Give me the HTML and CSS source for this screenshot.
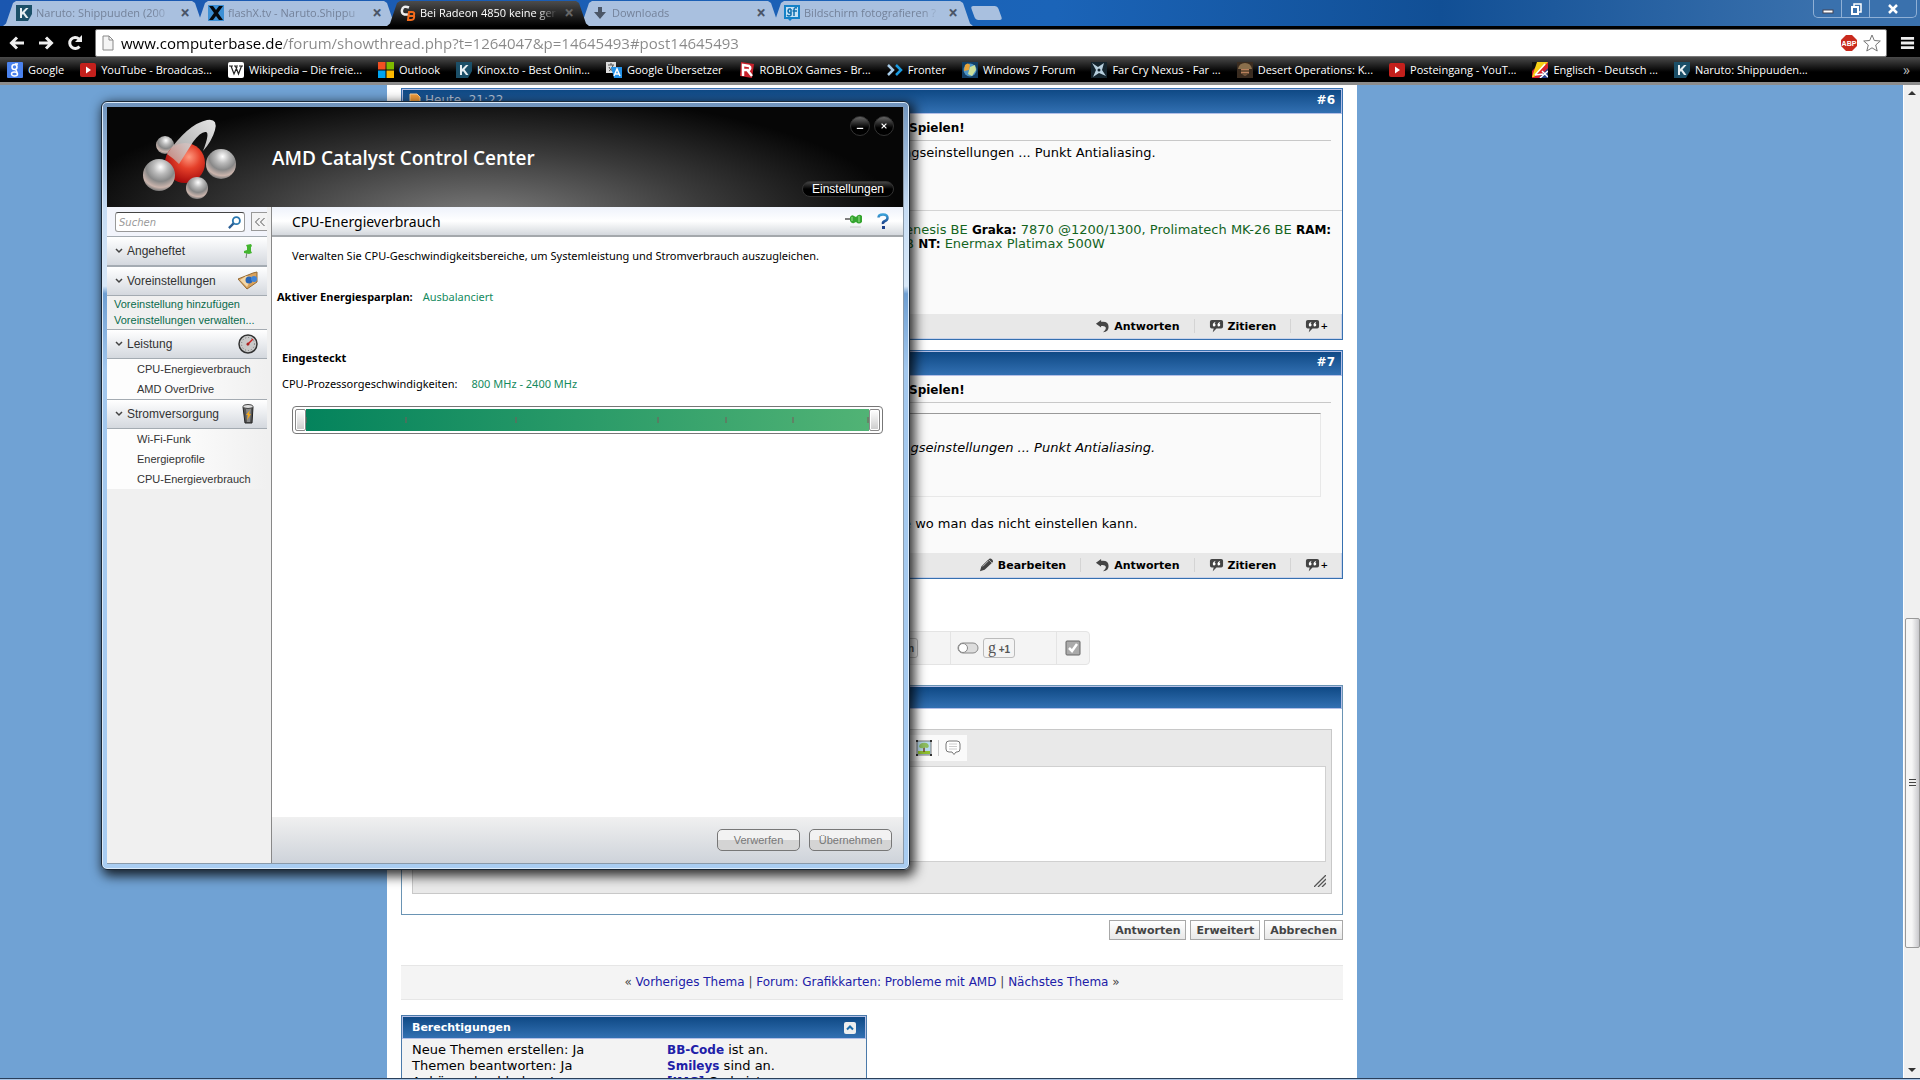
FILE: index.html
```html
<!DOCTYPE html>
<html lang="de">
<head>
  <meta charset="UTF-8" />
  <meta name="viewport" content="width=device-width, initial-scale=1.0"/>
  <title>Bei Radeon 4850 keine ger</title>
  <link rel="stylesheet" href="styles.css">
</head>
<body>
  <svg class="defs" aria-hidden="true">
    <defs>
      <symbol id="i-kinox" viewBox="0 0 16 16"><path d="M0 0h16v9l-4 7H0z" fill="#1b4f68"/><path d="M4 3h2v4l4-4h2.500L8.500 7.500 12.500 13H10L7 9l-1 1v3H4z" fill="#e6eef2"/></symbol>
      <symbol id="i-youtube" viewBox="0 0 16 16"><rect y="1" width="16" height="14" rx="2" fill="#c4201c"/><path d="M6 4.500v7l5-3.500z" fill="#fff"/></symbol>
      <symbol id="i-reply" viewBox="0 0 16 16"><path d="M1 5l5.500-4v2q8-1 8 5.500 0 5-6 5.500 3.500-2.500 3-5Q11 7 6.500 7.500V9z" fill="#444"/></symbol>
      <symbol id="i-quote" viewBox="0 0 16 16"><path d="M3 1h10q2 0 2 2v5q0 2-2 2H8l-4 4 1-4H3q-2 0-2-2V3q0-2 2-2z" fill="#444"/><path d="M4 6q0-2 3-3l-1 2q1 0 1 1.500T5.500 8 4 6zm5 0q0-2 3-3l-1 2q1 0 1 1.500T10.500 8 9 6z" fill="#fff"/></symbol>
      <symbol id="i-pencil" viewBox="0 0 16 16"><path d="M1 14l1.500-5L10 1.500Q12-.5 14 1.500t0 3.500L6 12.500z" fill="#444"/><path d="M4 9l6-6M10 1.500L14 5.500" stroke="#bbb"/></symbol>
      <symbol id="i-chevron" viewBox="0 0 8 6"><path d="M1 1l3 3 3-3" fill="none" stroke="#444" stroke-width="1.500"/></symbol>
      <radialGradient id="g-steel" cx=".55" cy=".25" r=".75"><stop offset="0" stop-color="#fff"/><stop offset=".3" stop-color="#bbb"/><stop offset=".6" stop-color="#888"/><stop offset=".85" stop-color="#cbb5ad"/><stop offset="1" stop-color="#777"/></radialGradient>
      <radialGradient id="g-red" cx=".6" cy=".35" r=".65"><stop offset="0" stop-color="#ff9a80"/><stop offset=".45" stop-color="#e5402a"/><stop offset="1" stop-color="#a80c0c"/></radialGradient>
      <linearGradient id="g-ring" x1="1" y1="0" x2="0" y2="1"><stop offset="0" stop-color="#fff"/><stop offset=".6" stop-color="#ccc"/><stop offset="1" stop-color="#c48a80"/></linearGradient>
      <linearGradient id="g-help" x1="0" y1="0" x2="0" y2="1"><stop offset="0" stop-color="#3aa0d8"/><stop offset="1" stop-color="#1b3f88"/></linearGradient>
    </defs>
  </svg>

  <header class="browser">
    <div class="tabstrip">
      <div class="tab"><svg class="fav"><use href="#i-kinox"/></svg><span>Naruto: Shippuuden (200</span><button aria-label="Schließen">×</button></div>
      <div class="tab"><svg class="fav" viewBox="0 0 16 16"><rect width="16" height="16" fill="#3c8fd4"/><path d="M1 1h4l3 4 3-4h4l-5 7 5 7h-4l-3-4-3 4H1l5-7z" fill="#05090e"/></svg><span>flashX.tv - Naruto.Shippu</span><button aria-label="Schließen">×</button></div>
      <div class="tab active"><svg class="fav" viewBox="0 0 16 16"><path d="M9 2.500Q3 0 2 5t6 4.500" fill="none" stroke="#eee" stroke-width="2.500"/><path d="M8 15l1-8h3q3 0 2 3 1 5-3 5z" fill="none" stroke="#f26a1b" stroke-width="2"/><path d="M9 11h5" stroke="#f26a1b" stroke-width="2"/></svg><span>Bei Radeon 4850 keine ger</span><button aria-label="Schließen">×</button></div>
      <div class="tab"><svg class="fav" viewBox="0 0 16 16"><path d="M6 2h4v5h4l-6 7-6-7h4z" fill="#4b5768"/></svg><span>Downloads</span><button aria-label="Schließen">×</button></div>
      <div class="tab"><svg class="fav" viewBox="0 0 16 16"><path d="M0 0h16v14H8l-2 2-2-2H0z" fill="#1482c8"/><rect x="2" y="2" width="12" height="10" fill="#c5e2f5"/><path d="M7 4H5Q3 6 5 8h2V4v6q-2 2-4 0M13 3q-3-1-3 2v6M8.500 6H13" fill="none" stroke="#0d6dad" stroke-width="1.500"/></svg><span>Bildschirm fotografieren ?</span><button aria-label="Schließen">×</button></div>
      <button class="newtab" aria-label="Neuer Tab"></button>
      <div class="wincontrols">
        <button aria-label="Minimieren"><svg viewBox="0 0 12 12"><rect x="1" y="7" width="10" height="3" fill="#fff" stroke="#445"/></svg></button>
        <button aria-label="Wiederherstellen"><svg viewBox="0 0 12 12"><path d="M4 3V1h7v8H9" fill="none" stroke="#fff" stroke-width="1.500"/><rect x="2" y="4" width="6" height="7" fill="none" stroke="#fff" stroke-width="2"/></svg></button>
        <button class="wide" aria-label="Schließen"><svg viewBox="0 0 12 12"><path d="M2 2l8 8M10 2l-8 8" stroke="#fff" stroke-width="2.500"/></svg></button>
      </div>
    </div>

    <div class="toolbar">
      <button aria-label="Zurück"><svg viewBox="0 0 16 16"><path d="M15 8H3M8 2.500L2.500 8 8 13.500" fill="none" stroke="#eee" stroke-width="3"/></svg></button>
      <button aria-label="Vorwärts"><svg viewBox="0 0 16 16"><path d="M1 8h12M8 2.500L13.500 8 8 13.500" fill="none" stroke="#eee" stroke-width="3"/></svg></button>
      <button aria-label="Neu laden"><svg viewBox="0 0 16 16"><path d="M12.500 11.500A5.500 5.500 0 1 1 12 4" fill="none" stroke="#eee" stroke-width="3"/><path d="M15 0v7H8z" fill="#eee"/></svg></button>
      <div class="address">
        <svg class="page-icon" viewBox="0 0 12 16"><path d="M1 1h6l4 4v10H1zM7 1v4h4" fill="#f4f4f4" stroke="#888"/></svg>
        <input type="text" aria-label="Adresse" value="www.computerbase.de/forum/showthread.php?t=1264047&amp;p=14645493#post14645493">
        <svg class="fav" viewBox="0 0 16 16"><path d="M5 0h6l5 5v6l-5 5H5l-5-5V5z" fill="#c92a1d"/><text x="8" y="11" class="abp">ABP</text></svg>
        <svg class="star" viewBox="0 0 18 18"><path d="M9 1l2.300 5.500 6 .5-4.600 4 1.500 6L9 13.800 3.800 17l1.500-6L.7 7l6-.5z" fill="#fff" stroke="#777"/></svg>
      </div>
      <button class="menu" aria-label="Menü"><svg viewBox="0 0 16 16"><path d="M1 3h14M1 8h14M1 13h14" stroke="#eee" stroke-width="3"/></svg></button>
    </div>

    <nav class="bookmarks">
      <a href="#"><svg class="fav" viewBox="0 0 16 16"><rect width="16" height="16" rx="1" fill="#4a82ee"/><g fill="none" stroke="#fff" stroke-width="1.500"><circle cx="7.500" cy="5" r="2.500"/><path d="M8 2h3M8 7.500q3 2 1 3.500"/><ellipse cx="7.500" cy="12" rx="3" ry="2"/></g></svg>Google</a>
      <a href="#"><svg class="fav"><use href="#i-youtube"/></svg>YouTube - Broadcas...</a>
      <a href="#"><svg class="fav" viewBox="0 0 16 16"><rect width="16" height="16" rx="2" fill="#fff"/><path d="M1 4h4M6 4h4M11 4h4M3 4l3 8 3-7M7.500 4l3 8 3-8" fill="none" stroke="#222" stroke-width="1.200"/></svg>Wikipedia – Die freie...</a>
      <a href="#"><svg class="fav" viewBox="0 0 16 16"><path d="M0 0h7.500v7.500H0z" fill="#f25022"/><path d="M8.500 0H16v7.500H8.500z" fill="#7fba00"/><path d="M0 8.500h7.500V16H0z" fill="#00a4ef"/><path d="M8.500 8.500H16V16H8.500z" fill="#ffb900"/></svg>Outlook</a>
      <a href="#"><svg class="fav"><use href="#i-kinox"/></svg>Kinox.to - Best Onlin...</a>
      <a href="#"><svg class="fav" viewBox="0 0 16 16"><rect width="10" height="11" fill="#ddd"/><path d="M2 3h6M5 1v2M3 9q4-2 4-6M3 5q1 3 4 4" stroke="#555" fill="none"/><path d="M5 5h11v11H8z" fill="#2492e8"/><path d="M8 14l3-7 3 7M9 12h4" fill="none" stroke="#fff" stroke-width="1.500"/></svg>Google Übersetzer</a>
      <a href="#"><svg class="fav" viewBox="0 0 16 16"><path d="M2 0l13 2-2 14-12-2z" fill="#c8202a"/><path d="M4 14V3l6 1q3 2-1 5l4 5M4 8h5" fill="none" stroke="#fff" stroke-width="2.500"/></svg>ROBLOX Games - Br...</a>
      <a href="#"><svg class="fav" viewBox="0 0 16 16"><path d="M1 3l5 5-5 5" fill="none" stroke="#a9cdea" stroke-width="2.500"/><path d="M9 3l5 5-5 5" fill="none" stroke="#199ae0" stroke-width="2.500"/></svg>Fronter</a>
      <a href="#"><svg class="fav" viewBox="0 0 16 16"><rect width="16" height="16" fill="#123f66"/><circle cx="8" cy="8" r="6.500" fill="#4d94c5"/><path d="M3 3q3-3 5 0l-1 5-5 1z" fill="#e8a33a"/><path d="M8 5l5-2 1 5-4 6-4-2z" fill="#cce09b"/></svg>Windows 7 Forum</a>
      <a href="#"><svg class="fav" viewBox="0 0 16 16"><rect width="16" height="16" fill="#15252e"/><path d="M1 1l6 4 6-4-2 7 4 6-7-3-6 4 3-7z" fill="#b7cfdd"/><circle cx="8" cy="8" r="1.500" fill="#15252e"/></svg>Far Cry Nexus - Far ...</a>
      <a href="#"><svg class="fav" viewBox="0 0 16 16"><rect width="16" height="16" fill="#3a2c20"/><path d="M1 7q1-6 7-6t7 6z" fill="#8a6f4c"/><path d="M4 7h8v4q-4 5-8 0z" fill="#b9805c"/><path d="M4 9h8M5 12h6" stroke="#221"/></svg>Desert Operations: K...</a>
      <a href="#"><svg class="fav"><use href="#i-youtube"/></svg>Posteingang - YouT...</a>
      <a href="#"><svg class="fav" viewBox="0 0 16 16"><rect width="16" height="16" fill="#d9232e"/><path d="M0 0h9L0 9z" fill="#111"/><path d="M5 0h11L2 15H0z" fill="#f7d117"/><path d="M16 6v10H7z" fill="#27408b"/><path d="M8 16l8-7M10 9l6 6M3 13L13 2M3 13l8-1" stroke="#fff" stroke-width="1.500"/></svg>Englisch - Deutsch ...</a>
      <a href="#"><svg class="fav"><use href="#i-kinox"/></svg>Naruto: Shippuuden...</a>
      <button class="more" aria-label="Weitere Lesezeichen">»</button>
    </nav>
  </header>

  <div class="viewport">
    <main class="page">
      <article class="post">
        <div class="bar"><span class="date"><svg viewBox="0 0 12 14"><path d="M1 1h7l3 3v9H1z" fill="#f6a03c" stroke="#fbd39b"/></svg>Heute, 21:22</span><a href="#">#6</a></div>
        <div class="post-body">
          <h2>Spielen!</h2>
          <p>ngseinstellungen ... Punkt Antialiasing.</p>
        </div>
        <div class="signature">Genesis BE <b>Graka:</b> 7870 @1200/1300, Prolimatech MK-26 BE <b>RAM:</b><br>GB <b>NT:</b> Enermax Platimax 500W</div>
        <div class="actions">
          <a href="#"><svg><use href="#i-reply"/></svg>Antworten</a>
          <a href="#"><svg><use href="#i-quote"/></svg>Zitieren</a>
          <a href="#" class="multi" aria-label="Mehrfach zitieren"><svg><use href="#i-quote"/></svg>+</a>
        </div>
      </article>

      <article class="post">
        <div class="bar"><span></span><a href="#">#7</a></div>
        <div class="post-body">
          <h2>Spielen!</h2>
          <blockquote>ungseinstellungen ... Punkt Antialiasing.</blockquote>
          <p>e wo man das nicht einstellen kann.</p>
        </div>
        <div class="actions">
          <a href="#"><svg><use href="#i-pencil"/></svg>Bearbeiten</a>
          <a href="#"><svg><use href="#i-reply"/></svg>Antworten</a>
          <a href="#"><svg><use href="#i-quote"/></svg>Zitieren</a>
          <a href="#" class="multi" aria-label="Mehrfach zitieren"><svg><use href="#i-quote"/></svg>+</a>
        </div>
      </article>

      <div class="share">
        <div class="share-first"><button>n</button></div>
        <div class="share-plus">
          <svg viewBox="0 0 22 12"><rect x="1" y="1" width="20" height="10" rx="5" fill="#ddd" stroke="#888"/><circle cx="6" cy="6" r="4.500" fill="#fff" stroke="#888"/></svg>
          <button><span>g</span> +1</button>
        </div>
        <div class="share-check"><svg viewBox="0 0 16 16"><rect x="1" y="1" width="14" height="14" rx="1" fill="#aaa" stroke="#666"/><path d="M4 8l3 3 5-7" fill="none" stroke="#fff" stroke-width="2.500"/></svg></div>
      </div>

      <section class="reply">
        <div class="bar"></div>
        <div class="editor">
          <div class="tools">
            <button aria-label="Grafik einfügen"><svg viewBox="0 0 16 16"><rect x="1" y="1" width="14" height="14" fill="#b9dbee" stroke="#777"/><path d="M2 11h12v3H2z" fill="#8fbf2f"/><path d="M8 7v5" stroke="#70432c" stroke-width="1.500"/><path d="M3 7q0-3 3-4 4-1 6 1 2 3-1 4-2-1-3 0-3 1-5-1z" fill="#8fc060"/><path d="M0 0h2v2H0zM14 0h2v2h-2zM0 14h2v2H0zM14 14h2v2h-2z" fill="#333"/></svg></button>
            <button aria-label="Zitat einfügen"><svg viewBox="0 0 16 16"><path d="M4 1h8q3 0 3 3v5q0 3-3 3h-1l-2 2.500L7 12H4q-3 0-3-3V4q0-3 3-3z" fill="#fff" stroke="#777"/><path d="M4 4h8M4 6.500h8M4 9h8" stroke="#ccc"/></svg></button>
          </div>
          <textarea aria-label="Nachricht"></textarea>
          <svg class="grip" viewBox="0 0 12 12"><path d="M0 12L12 0M4 12l8-8M8 12l4-4" stroke="#555" stroke-width="1.300"/></svg>
        </div>
      </section>
      <div class="submit"><button>Antworten</button><button>Erweitert</button><button>Abbrechen</button></div>

      <nav class="threadnav">« <a href="#">Vorheriges Thema</a> | <a href="#">Forum: Grafikkarten: Probleme mit AMD</a> | <a href="#">Nächstes Thema</a> »</nav>

      <section class="rights">
        <div class="bar"><span>Berechtigungen</span><button aria-label="Einklappen"><svg viewBox="0 0 12 12"><path d="M3 7.500l3-3 3 3" fill="none" stroke="#1a6cab" stroke-width="2"/></svg></button></div>
        <div class="rights-body">
          <div>Neue Themen erstellen: Ja<br>Themen beantworten: Ja<br>Anhänge hochladen: Ja</div>
          <div><a href="#">BB-Code</a> ist an.<br><a href="#">Smileys</a> sind an.<br><a href="#">[IMG]</a> Code ist an.</div>
        </div>
      </section>
    </main>
    <div class="scrollbar"><i class="up"></i><div class="thumb"></div><i class="down"></i></div>
  </div>
  <div class="taskbar"></div>

  <!-- Catalyst window floating over the browser -->
  <div class="window">
    <div class="win-inner">
      <header class="banner">
        <svg class="logo" viewBox="0 -2 96 86">
          <circle cx="22" cy="27" r="9" fill="url(#g-steel)"/>
          <circle cx="42" cy="45" r="20" fill="url(#g-red)"/>
          <path d="M24 36Q45 6 64 2q11-2 8 10-3 11-12 21 7-18 3-19-5-1-13 10L36 46Q30 40 24 36z" fill="url(#g-ring)" opacity=".9"/>
          <circle cx="78" cy="46" r="15" fill="url(#g-steel)"/>
          <circle cx="54" cy="70" r="11" fill="url(#g-steel)"/>
          <circle cx="16" cy="57" r="16" fill="url(#g-steel)"/>
        </svg>
        <h1>AMD Catalyst Control Center</h1>
        <div class="banner-side">
          <div class="rounds">
            <button aria-label="Minimieren"><svg viewBox="0 0 10 10"><path d="M1 8h8" stroke="#fff" stroke-width="1.500"/></svg></button>
            <button aria-label="Schließen"><svg viewBox="0 0 10 10"><path d="M2 2l6 6M8 2l-6 6" stroke="#fff" stroke-width="1.500"/></svg></button>
          </div>
          <button class="pill">Einstellungen</button>
        </div>
      </header>

      <aside class="side">
        <div class="search">
          <div class="searchbox"><input type="text" placeholder="Suchen" aria-label="Suchen"><svg viewBox="0 0 14 14"><circle cx="9" cy="5" r="3.800" fill="none" stroke="#2a78b0" stroke-width="2"/><path d="M6 8l-5 5" stroke="#2a5f96" stroke-width="2.500"/></svg></div>
          <button class="fold" aria-label="Leiste einklappen"><svg viewBox="0 0 10 8"><path d="M4.500 0l-4 4 4 4M9.500 0l-4 4 4 4" fill="none" stroke="#555"/></svg></button>
        </div>
        <button class="group"><svg class="chev"><use href="#i-chevron"/></svg>Angeheftet<svg class="gicon" viewBox="0 0 20 20"><path d="M9 11l-1 6" stroke="#777"/><path d="M8 4l5-1 1 2-1 1v4l1 2-3 1-5-1v-2l3-1V6z" fill="#43b52f"/></svg></button>
        <button class="group"><svg class="chev"><use href="#i-chevron"/></svg>Voreinstellungen<svg class="gicon" viewBox="0 0 20 20"><path d="M0 8l15-6 4-1v10l-10 7z" fill="#d9a25c" stroke="#956a34"/><path d="M2 9l6-4 6 1-5 10z" fill="#f2d7a8"/><circle cx="11" cy="9" r="3.500" fill="#2764b5"/><circle cx="16" cy="8" r="3" fill="#3f84d8"/></svg></button>
        <ul class="links"><li><a href="#">Voreinstellung hinzufügen</a></li><li><a href="#">Voreinstellungen verwalten...</a></li></ul>
        <button class="group"><svg class="chev"><use href="#i-chevron"/></svg>Leistung<svg class="gicon" viewBox="0 0 20 20"><circle cx="10" cy="10" r="9" fill="#c9c9c9" stroke="#333" stroke-width="1.500"/><circle cx="10" cy="10" r="6.500" fill="none" stroke="#777" stroke-dasharray="1 2"/><path d="M9 11l6-6" stroke="#c22" stroke-width="1.500"/><circle cx="10" cy="10" r="1.500" fill="#a22"/></svg></button>
        <ul class="items"><li><a href="#">CPU-Energieverbrauch</a></li><li><a href="#">AMD OverDrive</a></li></ul>
        <button class="group"><svg class="chev"><use href="#i-chevron"/></svg>Stromversorgung<svg class="gicon" viewBox="0 0 20 20"><path d="M5 3h10l-1 16H7z" fill="#555" stroke="#222"/><path d="M8 5h5l-1 13H9z" fill="#8a8a8a"/><ellipse cx="10" cy="2.500" rx="5" ry="2" fill="#ddd" stroke="#444"/><path d="M12 6l-4 5h2l-1 5 4-6h-2z" fill="#f5a81c"/></svg></button>
        <ul class="items"><li><a href="#">Wi-Fi-Funk</a></li><li><a href="#">Energieprofile</a></li><li><a href="#">CPU-Energieverbrauch</a></li></ul>
      </aside>

      <section class="panel">
        <div class="panel-head">
          <h2>CPU-Energieverbrauch</h2>
          <svg class="pin" viewBox="0 0 18 14"><path d="M0 5h6" stroke="#555" stroke-width="1.500"/><path d="M5 3q2-3 4-1l2 1q3-4 6-1v6q-3 3-6 0L9 9q-2 1-4-2z" fill="#35a52f"/><path d="M7 3v4M14 2v6" stroke="#9be08d"/><path d="M5 13h11" stroke="#ccc"/></svg>
          <svg class="help" viewBox="0 0 12 16"><path d="M1.500 4.500Q1.500 1.500 6 1.500t4.500 3.500Q10.500 7 8 8t-2 3" fill="none" stroke="url(#g-help)" stroke-width="2.500"/><rect x="5" y="13" width="3" height="3" fill="#1b3f88"/></svg>
        </div>
        <div class="panel-body">
          <p class="intro">Verwalten Sie CPU-Geschwindigkeitsbereiche, um Systemleistung und Stromverbrauch auszugleichen.</p>
          <p class="plan"><b>Aktiver Energiesparplan:</b><span>Ausbalanciert</span></p>
          <h3>Eingesteckt</h3>
          <p class="speed">CPU-Prozessorgeschwindigkeiten:<span>800 MHz - 2400 MHz</span></p>
          <div class="range">
            <svg class="ticks" viewBox="0 0 563 6" preserveAspectRatio="none"><path d="M0 0v6M100 0v6M210 0v6M352 0v6M420 0v6M487 0v6M562 0v6" stroke="#7a5a5a" stroke-width="1"/></svg>
            <input type="range" min="800" max="2400" value="800" aria-label="Minimale Geschwindigkeit">
            <input type="range" min="800" max="2400" value="2400" aria-label="Maximale Geschwindigkeit">
          </div>
        </div>
        <footer><button>Verwerfen</button><button>Übernehmen</button></footer>
      </section>
    </div>
  </div>
</body>
</html>
```
FILE: styles.css
```css
* {
  box-sizing: border-box;
}

body {
  margin: 0;
  height: 100vh;
  overflow: hidden;
  display: flex;
  flex-direction: column;
  font-family: "DejaVu Sans", sans-serif;
  font-size: 13px;
  color: #000;
}

h1, h2, h3, p, ul, blockquote {
  margin: 0;
  padding: 0;
}

ul {
  list-style: none;
}

a {
  text-decoration: none;
}

button {
  font-family: inherit;
  padding: 0;
  border: none;
  background: none;
  cursor: pointer;
}

svg {
  display: block;
  flex: none;
}

.defs {
  position: absolute;
  width: 0;
  height: 0;
}

.fav {
  width: 16px;
  height: 16px;
}

/* browser */
.browser {
  flex: none;
  font-family: "Open Sans", sans-serif;
  font-size: 11px;
  background: #000;
  border-bottom: 3px solid #8c8c8c;
}

.tabstrip {
  display: flex;
  height: 26px;
  padding: 1px 3px 0;
  background: linear-gradient(90deg, #1b57b0, #1b64b8 55%, #114f95 75%, #3a71ad 95%);
}

.tab {
  display: flex;
  align-items: center;
  gap: 4px;
  width: 202px;
  margin-right: -10px;
  padding: 0 12px 2px 13px;
  color: #74829a;
  background: #a9c0df;
  clip-path: polygon(0 100%, 3px 90%, 10px 8%, 13px 0, 189px 0, 192px 8%, 199px 90%, 100% 100%);
}

.tab span {
  flex: 1;
  overflow: hidden;
  white-space: nowrap;
  mask-image: linear-gradient(90deg, #000 85%, transparent);
}

.tab button {
  width: 16px;
  font-size: 17px;
  line-height: 16px;
  font-weight: bold;
  color: #4a5568;
}

.tab.active {
  z-index: 1;
  color: #fff;
  background: linear-gradient(#4c4c4c, #000);
}

.tab.active button {
  color: #666;
}

.newtab {
  width: 27px;
  height: 14px;
  margin: 5px 0 0 10px;
  background: #a9c0df;
  border-radius: 3px;
  transform: skewX(20deg);
}

.wincontrols {
  display: flex;
  height: 18px;
  margin: -1px 0 0 auto;
  border: 1px solid #8fb0d6;
  border-top: none;
  border-radius: 0 0 5px 5px;
}

.wincontrols button {
  width: 28px;
  display: flex;
  justify-content: center;
  align-items: center;
  border-right: 1px solid #8fb0d6;
}

.wincontrols .wide {
  width: 46px;
  border: none;
}

.wincontrols svg {
  width: 12px;
  height: 12px;
}

.toolbar {
  display: flex;
  align-items: center;
  height: 31px;
  padding: 2px 5px 0 8px;
}

.toolbar button {
  width: 29px;
}

.toolbar button svg {
  width: 18px;
  height: 16px;
}

.toolbar .menu {
  width: 28px;
  padding-left: 13px;
}

.toolbar .menu svg {
  width: 15px;
}

.address {
  flex: 1;
  display: flex;
  align-items: center;
  gap: 6px;
  height: 28px;
  padding: 0 5px;
  background: #fff;
  border: 1px solid #777;
  border-radius: 2px;
}

.address input {
  flex: 1;
  height: 24px;
  padding: 0;
  border: none;
  outline: none;
  font-family: "Open Sans", sans-serif;
  font-size: 15px;
  color: transparent;
  background: linear-gradient(90deg, #000 161px, #888 161px);
  background-clip: text;
}

.page-icon {
  width: 12px;
  height: 16px;
  margin: 0 1px;
}

.star {
  width: 18px;
  height: 18px;
}

.abp {
  font: bold 7px "Liberation Sans", sans-serif;
  fill: #fff;
  text-anchor: middle;
}

.bookmarks {
  display: flex;
  align-items: center;
  gap: 16px;
  height: 25px;
  padding: 0 10px 0 7px;
  background: linear-gradient(#4a4a4a, #000 60%);
}

.bookmarks a {
  display: flex;
  align-items: center;
  gap: 5px;
  color: #fff;
  white-space: nowrap;
}

.more {
  margin-left: auto;
  color: #bbb;
  font-size: 14px;
}

/* forum */
.viewport {
  flex: 1;
  min-height: 0;
  display: flex;
  justify-content: space-between;
  background: #70a2d4;
}

.page {
  width: 970px;
  margin-left: 387px;
  padding: 3px 14px 0;
  background: #fff;
  overflow: hidden;
}

.post {
  margin-bottom: 10px;
  border: 1px solid #3670b0;
  background: #fafafa;
}

.bar {
  display: flex;
  justify-content: space-between;
  align-items: center;
  height: 23px;
  padding: 0 6px;
  font-weight: bold;
  font-size: 12px;
  color: #fff;
  border: 1px solid #b4bfe6;
  background: linear-gradient(#0f4985, #3270b2);
}

.post .bar {
  height: 25px;
  padding-bottom: 3px;
}

.bar a {
  color: #fff;
}

.date {
  display: flex;
  gap: 4px;
  font-weight: normal;
  color: #b8c4d8;
}

.date svg {
  width: 12px;
  height: 14px;
}

.post-body {
  padding: 5px 11px 0 501px;
}

.post h2 {
  padding: 0 0 3px 6px;
  font-size: 12px;
  line-height: 18px;
  border-bottom: 1px solid #c8c8c8;
}

.post p {
  height: 69px;
  padding-top: 3px;
  line-height: 18px;
}

.signature {
  height: 104px;
  padding: 12px 0 0 493px;
  border-top: 1px solid #d4d4d4;
  line-height: 14px;
  color: #14641e;
  white-space: nowrap;
}

.signature b {
  font-size: 12px;
  color: #000;
}

.post blockquote {
  height: 84px;
  margin: 10px 10px 0 -20px;
  padding: 25px 0 0 10px;
  border: 1px solid #e8e8e8;
  border-top-color: #999;
  font-style: italic;
  line-height: 18px;
}

.post blockquote + p {
  height: 56px;
  padding-top: 18px;
}

.actions {
  display: flex;
  justify-content: flex-end;
  align-items: center;
  height: 25px;
  padding-right: 13px;
  background: #e8e8e8;
  border: 1px solid #c9d3ea;
  border-top: none;
}

.actions a {
  display: flex;
  align-items: center;
  gap: 4px;
  height: 14px;
  padding: 0 14px;
  font-weight: bold;
  font-size: 11px;
  color: #000;
  border-right: 1px solid #d4d4d4;
}

.actions svg {
  width: 15px;
  height: 15px;
}

.actions .multi {
  gap: 0;
  padding-right: 0;
  border: none;
  font-size: 9px;
  line-height: 22px;
}

.share {
  display: flex;
  width: 689px;
  height: 34px;
  margin-top: 52px;
  border: 1px solid #e4e4e4;
  border-radius: 4px;
  background: #f4f4f4;
}

.share > div {
  display: flex;
  align-items: center;
  padding: 0 8px;
}

.share-first {
  flex: 1;
  justify-content: flex-end;
}

.share > .share-first {
  padding-right: 32px;
}

.share > .share-plus {
  width: 107px;
  gap: 4px;
  padding: 0 6px;
  border-left: 1px solid #e4e4e4;
  border-right: 1px solid #e4e4e4;
}

.share button {
  width: 32px;
  height: 20px;
  border: 1px solid #bbb;
  border-radius: 3px;
  font: bold 10px "Liberation Sans", sans-serif;
  color: #555;
}

.share-first button {
  text-align: right;
  padding-right: 3px;
}

.share button span {
  font: 16px "Liberation Serif", serif;
  line-height: 12px;
}

.share-plus svg {
  width: 22px;
  height: 12px;
}

.share-check svg {
  width: 16px;
  height: 16px;
}

.reply {
  margin-top: 20px;
  padding-bottom: 20px;
  border: 1px solid #6a94b4;
}

.editor {
  display: flex;
  flex-direction: column;
  height: 165px;
  margin: 20px 10px 0;
  padding: 5px;
  background: #e9e9e9;
  border: 1px solid #c8c8c8;
}

.tools {
  display: flex;
  align-items: center;
  justify-content: flex-end;
  width: 549px;
  height: 26px;
  background: #fafafa;
}

.tools button {
  padding: 0 6px;
}

.tools button + button {
  border-left: 1px solid #ccc;
}

.tools svg {
  width: 16px;
  height: 16px;
}

.editor textarea {
  height: 96px;
  margin-top: 5px;
  border: 1px solid #d0d0d0;
  resize: none;
}

.grip {
  width: 12px;
  height: 12px;
  margin: 13px 0 0 auto;
}

.submit {
  display: flex;
  justify-content: flex-end;
  gap: 4px;
  margin-top: 5px;
}

.submit button {
  height: 20px;
  padding: 0 5px;
  font-size: 11px;
  font-weight: bold;
  color: #444;
  background: linear-gradient(#fff, #e8e8e8);
  border: 1px solid #a8a8a8;
}

.threadnav {
  margin-top: 25px;
  border: 1px solid #e6e6e6;
  border-width: 1px 0;
  background: #f4f4f4;
  font-size: 12px;
  line-height: 33px;
  text-align: center;
  color: #444;
}

.threadnav a {
  color: #2020a8;
}

.rights {
  width: 466px;
  margin-top: 15px;
  border: 1px solid #4a7aaa;
  background: #f3f3f3;
}

.rights .bar {
  padding: 0 9px;
  font-size: 11px;
}

.rights .bar button {
  background: #eee;
  border-radius: 2px;
}

.rights .bar svg {
  width: 12px;
  height: 12px;
}

.rights-body {
  display: grid;
  grid-template-columns: 255px 1fr;
  padding: 3px 10px;
  line-height: 16px;
}

.rights-body a {
  font-size: 12px;
  font-weight: bold;
  color: #2020a8;
}

.scrollbar {
  display: flex;
  flex-direction: column;
  align-items: center;
  width: 17px;
  background: #f0f0f0;
  border-left: 1px solid #fff;
}

.up {
  margin-top: 6px;
  border: 4px solid transparent;
  border-top: none;
  border-bottom-color: #333;
}

.down {
  margin: auto 0 6px;
  border: 4px solid transparent;
  border-bottom: none;
  border-top-color: #333;
}

.thumb {
  width: 15px;
  height: 330px;
  margin-top: 523px;
  border: 1px solid #999;
  border-radius: 2px;
  background:
    repeating-linear-gradient(#444 0 1px, #eee 1px 3px) center / 7px 8px no-repeat,
    linear-gradient(90deg, #f6f6f6 45%, #c8c8cc);
}

.taskbar {
  flex: none;
  height: 2px;
  background: #a9c4e4;
  border-top: 1px solid #2a3f5a;
}

/* catalyst window */
.window {
  position: absolute;
  left: 101px;
  top: 101px;
  width: 809px;
  height: 769px;
  padding: 5px;
  border: 1px solid #1b2836;
  border-radius: 6px;
  background: linear-gradient(#6f93bc, #c6dcf4 14%, #d8e8f8 24%, #6f9fd2 25%, #a3c8ee 35%, #a9cdf2);
  box-shadow: inset 0 0 0 1px #dcebfa, 3px 4px 12px 2px rgba(0, 0, 0, 0.8);
  font-family: "Liberation Sans", sans-serif;
}

.win-inner {
  display: grid;
  grid-template: 100px 1fr / 165px 1fr;
  height: 100%;
  border-right: 1px solid #8a9aaa;
  border-bottom: 1px solid #8a9aaa;
  background: #fff;
}

.banner {
  grid-column: 1 / 3;
  display: flex;
  justify-content: space-between;
  padding: 9px 9px 10px 36px;
  background: radial-gradient(ellipse 420px 130px at 47% 115%, #808080, #3a3a3a 55%, #060606);
}

.logo {
  width: 96px;
  height: 86px;
}

.banner h1 {
  flex: 1;
  padding-left: 33px;
  font: 600 19px/84px "Open Sans", sans-serif;
  color: #fff;
}

.banner-side {
  display: flex;
  flex-direction: column;
  justify-content: space-between;
  align-items: flex-end;
}

.rounds {
  display: flex;
  gap: 4px;
}

.rounds button {
  display: flex;
  justify-content: center;
  align-items: center;
  width: 20px;
  height: 20px;
  border: 1px solid #333;
  border-radius: 50%;
  background: linear-gradient(#666, #000 60%);
}

.rounds svg {
  width: 8px;
  height: 8px;
}

.pill {
  width: 92px;
  height: 16px;
  border: 1px solid #333;
  border-radius: 8px;
  background: linear-gradient(#444, #000 50%);
  color: #fff;
  font-size: 12px;
  line-height: 12px;
}

.side {
  display: flex;
  flex-direction: column;
  padding-right: 4px;
  background: #f0f0f0;
  border-right: 1px solid #888;
}

.search {
  display: flex;
  justify-content: space-between;
  align-items: flex-start;
  height: 29px;
  padding: 5px 0 0 8px;
  background: #f2f4fb;
}

.searchbox {
  display: flex;
  align-items: center;
  width: 130px;
  height: 20px;
  padding: 0 3px;
  border: 1px solid #999;
  border-top-color: #444;
  border-radius: 3px;
  background: #fff;
}

.searchbox input {
  flex: 1;
  min-width: 0;
  padding: 0;
  border: none;
  background: none;
  font: italic 10px "DejaVu Sans", sans-serif;
}

.searchbox input::placeholder {
  color: #999;
}

.searchbox svg {
  width: 13px;
  height: 13px;
}

.fold {
  display: flex;
  justify-content: center;
  align-items: center;
  width: 16px;
  height: 19px;
  border: 1px solid #999;
  border-right: none;
  background: #f4f4f4;
}

.fold svg {
  width: 10px;
  height: 8px;
}

.group {
  display: flex;
  align-items: center;
  gap: 4px;
  height: 30px;
  padding: 0 9px 0 8px;
  border: 1px solid #a4abb2;
  border-width: 1px 0;
  background: linear-gradient(#fff, #eceef1 45%, #d4d8de);
  font-size: 12px;
  color: #333;
}

.chev {
  width: 8px;
  height: 6px;
}

.gicon {
  width: 20px;
  height: 20px;
  margin-left: auto;
}

.links {
  padding: 0 7px 1px;
  line-height: 16px;
  font-size: 11px;
}

.links a {
  color: #0a6b4c;
}

.items {
  padding: 0 0 0 30px;
  background: linear-gradient(90deg, #fdfdfd 40%, #f0f0f0);
  line-height: 20px;
  font-size: 11px;
}

.items a {
  color: #333;
}

.panel {
  display: flex;
  flex-direction: column;
  font-family: "Noto Sans", sans-serif;
  font-size: 11px;
}

.panel-head {
  display: flex;
  align-items: center;
  height: 30px;
  padding: 0 14px 0 20px;
  border-bottom: 2px solid #a4a8ac;
  background: linear-gradient(#eef2fb, #fff 50%, #d4d8dd);
}

.panel-head h2 {
  flex: 1;
  font-size: 14px;
  font-weight: normal;
}

.pin {
  width: 18px;
  height: 14px;
}

.help {
  width: 12px;
  height: 16px;
  margin-left: 14px;
}

.panel-body {
  flex: 1;
  padding: 11px 20px 0 20px;
  line-height: 16px;
}

.plan {
  margin: 25px 0 0 -15px;
}

.plan span {
  margin-left: 10px;
}

.panel-body span {
  color: #148a5e;
}

.panel-body h3 {
  margin: 45px 0 0 -10px;
  font-size: 11px;
}

.speed {
  margin: 10px 0 0 -10px;
}

.speed span {
  margin-left: 14px;
}

.range {
  display: grid;
  align-items: center;
  height: 28px;
  margin-top: 14px;
  padding: 0 2px;
  border: 1px solid #777;
  border-radius: 4px;
  background: linear-gradient(90deg, #04835c, #51b375) center / calc(100% - 26px) 22px no-repeat;
}

.range > * {
  grid-area: 1 / 1;
}

.ticks {
  justify-self: center;
  width: calc(100% - 22px);
  height: 6px;
}

.range input {
  appearance: none;
  width: 100%;
  margin: 0;
  background: none;
  pointer-events: none;
}

.range input::-webkit-slider-thumb {
  appearance: none;
  width: 11px;
  height: 22px;
  border: 1px solid #888;
  border-radius: 2px;
  background: linear-gradient(#fff, #ccc);
  box-shadow: inset 0 0 0 1px #fff;
  pointer-events: auto;
}

.panel footer {
  display: flex;
  justify-content: flex-end;
  gap: 9px;
  height: 46px;
  padding: 12px 11px 12px 9px;
  background: linear-gradient(#f0f0f0, #ced3da);
}

.panel footer button {
  width: 83px;
  border: 1px solid #777;
  border-radius: 5px;
  background: linear-gradient(#f2f2f2 50%, #d4d4d4 50%);
  font: 11px "Liberation Sans", sans-serif;
  color: #777;
}
```
